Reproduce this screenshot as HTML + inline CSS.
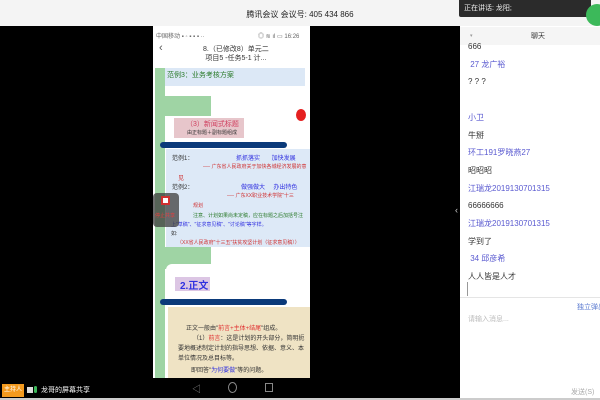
<!DOCTYPE html>
<html><head><meta charset="utf-8"><style>
*{margin:0;padding:0;box-sizing:border-box}
body{width:600px;height:400px;overflow:hidden;background:#000;font-family:"Liberation Sans","Noto Sans CJK SC",sans-serif;position:relative}
.a{position:absolute;white-space:nowrap}
.s{font-size:6px}
</style></head><body>
<div class="a" style="left:0;top:0;width:600px;height:26px;background:#f4f4f4"></div>
<div class="a" style="left:0;top:9px;width:600px;text-align:center;font-size:8px;color:#222">腾讯会议 会议号: 405 434 866</div>
<div class="a" style="left:459px;top:0;width:132px;height:17px;background:#2b2b2b;border-radius:0 0 2px 2px"></div>
<div class="a" style="left:464px;top:3px;font-size:7px;color:#eee">正在讲话: 龙阳;</div>
<div class="a" style="left:586px;top:4px;width:22px;height:22px;border-radius:50%;background:#3cb95a"></div>
<!-- right panel -->
<div class="a" style="left:460px;top:26px;width:140px;height:374px;background:#fff"></div>
<div class="a" style="left:460px;top:27px;width:140px;height:18px;background:#f5f5f5"></div>
<div class="a" style="left:531px;top:31px;font-size:7px;color:#333">聊天</div>
<div class="a" style="left:470px;top:33px;font-size:5px;color:#999">▾</div>
<div class="a" style="left:468px;top:38px;font-size:8px;line-height:17.7px;color:#333">
<div>666</div>
<div style="color:#5a5ad0">&nbsp;27 龙广裕</div>
<div>? ? ?</div>
<div>&nbsp;</div>
<div style="color:#5a5ad0">小卫</div>
<div>牛掰</div>
<div style="color:#5a5ad0">环工191罗晓燕27</div>
<div>昭昭昭</div>
<div style="color:#5a5ad0">江瑞龙2019130701315</div>
<div>66666666</div>
<div style="color:#5a5ad0">江瑞龙2019130701315</div>
<div>学到了</div>
<div style="color:#5a5ad0">&nbsp;34 邱彦希</div>
<div>人人皆是人才</div>
</div>
<div class="a" style="left:467px;top:282px;width:1px;height:14px;background:#999"></div>
<div class="a" style="left:460px;top:297px;width:140px;height:1px;background:#e5e5e5"></div>
<div class="a" style="left:577px;top:302px;font-size:7px;color:#5a7ad0">独立弹出</div>
<div class="a" style="left:468px;top:314px;font-size:7px;color:#bbb">请输入消息...</div>
<div class="a" style="left:571px;top:387px;font-size:7px;color:#aaa">发送(S)</div>
<div class="a" style="left:455px;top:205px;font-size:9px;color:#ccc">‹</div>
<!-- phone -->
<div class="a" style="left:153px;top:26px;width:157px;height:352px;background:#fff;overflow:hidden">
 <div class="a s" style="left:3px;top:5px;color:#666">中国移动 ▪ ◦ ▪ ▪ ▪ ··</div>
 <div class="a s" style="left:105px;top:5px;color:#666">◎ ≋ ıl ▭ 16:26</div>
 <div class="a" style="left:6px;top:16px;font-size:11px;color:#555">‹</div>
 <div class="a" style="left:50px;top:19px;font-size:7px;color:#333;text-align:center;line-height:9px">8.（已修改8）单元二<br>项目5 -任务5-1 计...</div>
 <div class="a" style="left:2px;top:42px;width:10px;height:310px;background:#9fd4a4"></div>
 <div class="a" style="left:2px;top:70px;width:56px;height:20px;background:#9fd4a4"></div>
 <div class="a" style="left:12px;top:42px;width:140px;height:18px;background:#dce8f6"></div>
 <div class="a s" style="left:14px;top:44px;color:#2a7a2a;font-size:7px">范例3：业务考核方案</div>
 <div class="a" style="left:13px;top:90px;width:145px;height:56px;background:#fff;border-radius:6px 0 0 0"></div>
 <div class="a" style="left:21px;top:92px;width:70px;height:20px;background:#e7c6cb"></div>
 <div class="a s" style="left:33px;top:93px;color:#d04060;font-size:7px">（3）新闻式标题</div>
 <div class="a s" style="left:34px;top:103px;color:#333;font-size:5px">由正标题＋副标题组成</div>
 <div class="a" style="left:143px;top:83px;width:10px;height:12px;border-radius:50%;background:#e52020"></div>
 <div class="a" style="left:7px;top:116px;width:127px;height:6px;background:#0b3a7a;border-radius:3px"></div>
 <div class="a" style="left:13px;top:123px;width:145px;height:98px;background:#dde9f7"></div>
 <div class="a s" style="left:19px;top:127px;color:#333">范例1：</div>
 <div class="a s" style="left:83px;top:127px;color:#3030e0">抓抓落实&nbsp;&nbsp;&nbsp;&nbsp;&nbsp;&nbsp;&nbsp;加快发展</div>
 <div class="a" style="left:50px;top:137px;color:#d03030;font-size:5px">── 广东省人民政府关于加快各城经济发展的意</div>
 <div class="a s" style="left:25px;top:147px;color:#d03030">见</div>
 <div class="a s" style="left:19px;top:156px;color:#333">范例2：</div>
 <div class="a s" style="left:88px;top:156px;color:#3030e0">做强做大&nbsp;&nbsp;&nbsp;&nbsp;&nbsp;办出特色</div>
 <div class="a" style="left:74px;top:166px;color:#d03030;font-size:5px">── 广东XX职业技术学院"十三</div>
 <div class="a" style="left:40px;top:176px;color:#d03030;font-size:5px">规划</div>
 <div class="a" style="left:40px;top:186px;color:#2a7a2a;font-size:5px">注意、计划如果尚未定稿，应在标题之后加括号注</div>
 <div class="a" style="left:18px;top:195px;color:#3030e0;font-size:5px">上"草稿"、"征求意见稿"、"讨论稿"等字样。</div>
 <div class="a" style="left:18px;top:204px;color:#333;font-size:5px">如:</div>
 <div class="a" style="left:24px;top:213px;color:#d03030;font-size:5px">（XX省人民政府"十三五"扶贫攻坚计划（征求意见稿））</div>
 <div class="a" style="left:2px;top:221px;width:56px;height:22px;background:#9fd4a4"></div>
 <div class="a" style="left:13px;top:238px;width:145px;height:40px;background:#fff;border-radius:6px 0 0 0"></div>
 <div class="a" style="left:22px;top:251px;width:35px;height:14px;background:#dcc6e4"></div>
 <div class="a" style="left:27px;top:251px;color:#3030e0;font-size:10px;font-weight:bold">2.正文</div>
 <div class="a" style="left:7px;top:273px;width:127px;height:6px;background:#0b3a7a;border-radius:3px"></div>
 <div class="a" style="left:15px;top:281px;width:143px;height:71px;background:#efe3c4"></div>
 <div class="a" style="left:33px;top:297px;color:#333;font-size:6px">正文一般由"<span style="color:#e03030">前言+主体+结尾</span>"组成。</div>
 <div class="a" style="left:40px;top:307px;color:#333;font-size:6px">（1）<span style="color:#e03030">前言</span>：这是计划的开头部分，简明扼</div>
 <div class="a" style="left:25px;top:317px;color:#333;font-size:6px">要地概述制定计划的指导思想、依据、意义、本</div>
 <div class="a" style="left:25px;top:327px;color:#333;font-size:6px">单位情况及总目标等。</div>
 <div class="a" style="left:38px;top:339px;color:#333;font-size:6px">即回答"<span style="color:#3030e0">为何要做</span>"等的问题。</div>
</div>
<div class="a" style="left:153px;top:193px;width:26px;height:34px;background:rgba(60,60,60,.75);border-radius:4px"></div>
<div class="a" style="left:161px;top:196px;width:9px;height:9px;background:#fff;border:2px solid #d03030"></div>
<div class="a" style="left:155px;top:212px;font-size:5px;color:#e04040">停止共享</div>
<!-- nav -->
<div class="a" style="left:192px;top:382px;font-size:9px;color:#888">◁</div>
<div class="a" style="left:228px;top:382px;width:9px;height:11px;border:1px solid #888;border-radius:50%"></div>
<div class="a" style="left:265px;top:383px;width:8px;height:9px;border:1px solid #888"></div>
<div class="a" style="left:0;top:398px;width:600px;height:2px;background:#ccc"></div>
<!-- bottom left -->
<div class="a" style="left:2px;top:384px;width:22px;height:13px;background:#f39a1e;font-size:6px;color:#fff;text-align:center;line-height:13px">主持人</div>
<div class="a" style="left:27px;top:387px;width:6px;height:6px;background:#ddd"></div>
<div class="a" style="left:34px;top:386px;width:3px;height:7px;background:#3cb95a;border-radius:2px"></div>
<div class="a" style="left:41px;top:385px;font-size:7px;color:#fff">龙哥的屏幕共享</div>
</body></html>
